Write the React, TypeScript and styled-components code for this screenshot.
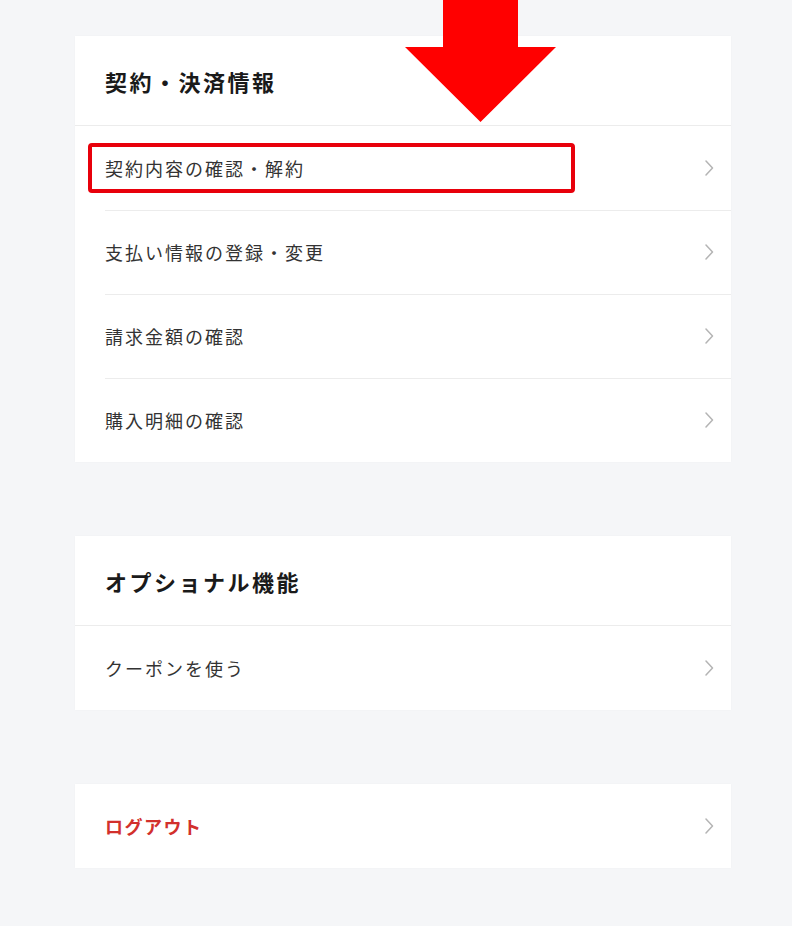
import React from "react";
import styled, { createGlobalStyle } from "styled-components";

const GlobalStyle = createGlobalStyle`
  html, body {
    margin: 0;
    padding: 0;
    background-color: #f5f6f8;
  }
  body {
    font-family: "Noto Sans CJK JP", "Noto Sans", sans-serif;
  }
`;

type MenuItem = {
  label: string;
  highlighted?: boolean;
};

type SectionType = {
  title?: string;
  items: MenuItem[];
  danger?: boolean;
};

const sections: SectionType[] = [
  {
    title: "契約・決済情報",
    items: [
      { label: "契約内容の確認・解約", highlighted: true },
      { label: "支払い情報の登録・変更" },
      { label: "請求金額の確認" },
      { label: "購入明細の確認" },
    ],
  },
  {
    title: "オプショナル機能",
    items: [{ label: "クーポンを使う" }],
  },
  {
    items: [{ label: "ログアウト" }],
    danger: true,
  },
];

function Chevron() {
  return (
    <ChevronIcon width="9" height="16" viewBox="0 0 9 16">
      <polyline
        points="1,1 7.5,8 1,15"
        fill="none"
        stroke="#b4b4b4"
        strokeWidth="1.5"
        strokeLinecap="round"
        strokeLinejoin="round"
      />
    </ChevronIcon>
  );
}

function App() {
  return (
    <>
      <GlobalStyle />
      <Page>
        {sections.map((section, i) => (
          <Card key={i}>
            {section.title && <CardTitle>{section.title}</CardTitle>}
            {section.items.map((item, j) => (
              <Row key={item.label} $divider={j > 0}>
                <RowLabel $danger={section.danger}>{item.label}</RowLabel>
                <Chevron />
                {item.highlighted && <Highlight />}
              </Row>
            ))}
          </Card>
        ))}
        <Arrow width="151" height="122" viewBox="0 0 151 122">
          <polygon
            points="38,0 113,0 113,47 151,47 75.5,122 0,47 38,47"
            fill="#ff0000"
          />
        </Arrow>
      </Page>
    </>
  );
}

export default App;

const Page = styled.div`
  position: relative;
  display: flex;
  flex-direction: column;
  gap: 74px;
  width: 656px;
  padding: 36px 0 56px 75px;
`;

const Card = styled.section`
  background-color: #ffffff;
  box-shadow: 0 0 2px rgba(0, 0, 0, 0.03);
`;

const CardTitle = styled.h2`
  margin: 0;
  height: 90px;
  display: flex;
  align-items: center;
  padding: 0 30px;
  font-size: 22px;
  font-weight: 700;
  letter-spacing: 2.5px;
  color: #1a1a1a;
  border-bottom: 1px solid #ececec;
  box-sizing: border-box;
`;

const Row = styled.div<{ $divider: boolean }>`
  position: relative;
  display: flex;
  align-items: center;
  justify-content: space-between;
  height: 84px;
  padding: 0 17px 0 30px;
  cursor: pointer;

  &::before {
    content: "";
    display: ${(p) => (p.$divider ? "block" : "none")};
    position: absolute;
    top: 0;
    left: 30px;
    right: 0;
    height: 1px;
    background-color: #ececec;
  }
`;

const RowLabel = styled.span<{ $danger?: boolean }>`
  font-size: 18px;
  letter-spacing: ${(p) => (p.$danger ? "1.5px" : "2px")};
  font-weight: ${(p) => (p.$danger ? 700 : 400)};
  color: ${(p) => (p.$danger ? "#d2302c" : "#333333")};
`;

const ChevronIcon = styled.svg`
  flex-shrink: 0;
`;

const Highlight = styled.div`
  position: absolute;
  left: 13px;
  top: 17px;
  width: 487px;
  height: 50px;
  border: 4px solid #e8000b;
  border-radius: 4px;
  box-sizing: border-box;
  pointer-events: none;
`;

const Arrow = styled.svg`
  position: absolute;
  left: 405px;
  top: 0;
`;
